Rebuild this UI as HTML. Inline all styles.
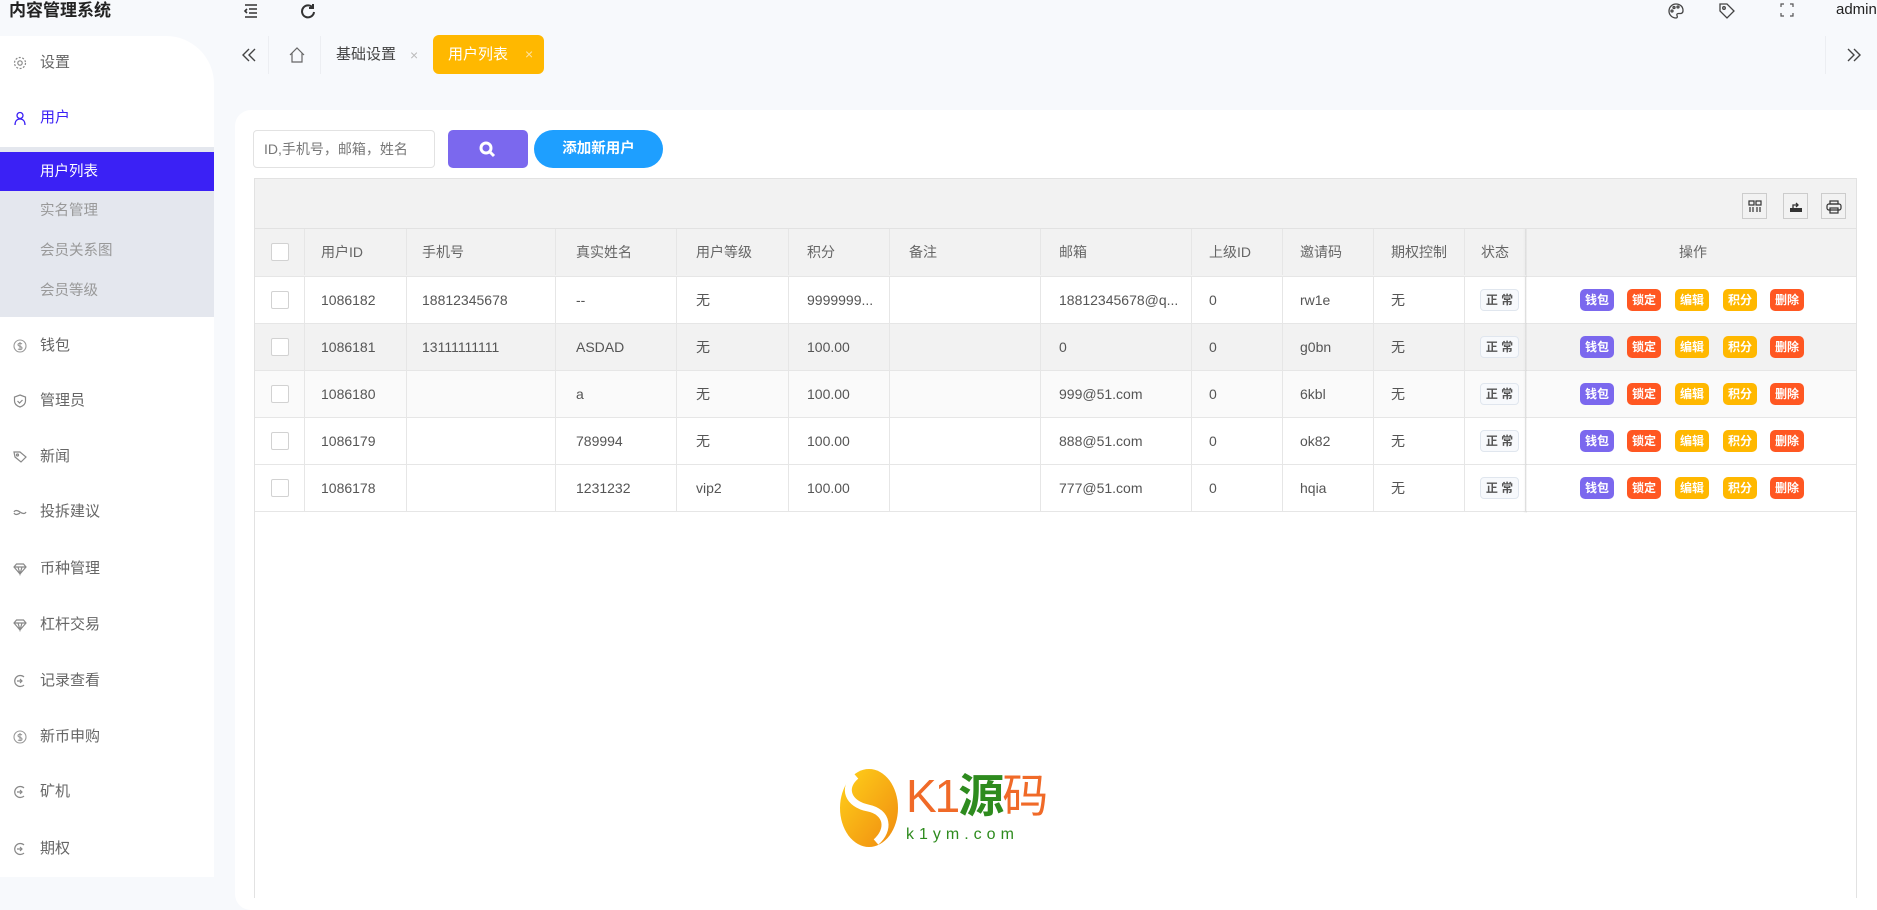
<!DOCTYPE html>
<html><head><meta charset="utf-8"><style>
*{margin:0;padding:0;box-sizing:border-box}
body{width:1877px;height:877px;overflow:hidden;background:#f7f9fc;font-family:"Liberation Sans","Noto Sans CJK SC",sans-serif;color:#333;position:relative}
.abs{position:absolute}
.title{left:9px;top:0;font-size:17px;font-weight:bold;color:#222;line-height:22px}
.side{left:0;top:36px;width:214px;height:841px;background:#fff;border-top-right-radius:48px;overflow:hidden}
.mi{position:absolute;left:0;width:214px;font-size:15px;color:#666;height:30px;line-height:30px;padding-left:40px}
.mi svg{position:absolute;left:13px;top:8px}
.sub{position:absolute;left:0;top:111px;width:214px;height:170px;background:#e4e7ee}
.sub div{height:40px;line-height:40px;padding-left:40px;font-size:14.5px;color:#999}
.sub .act{background:#3b21f5;color:#fff;margin-top:5px;height:39px}
.tab{font-size:15px;line-height:38px;top:36px;height:38px}
.card{left:235px;top:110px;width:1660px;height:800px;background:#fff;border-radius:16px}
.tbl{left:254px;top:178px;width:1603px;height:720px;border:1px solid #e2e2e2;border-bottom:none}
.tb{position:absolute;left:0;top:0;width:100%;height:50px;background:#f2f2f2;border-bottom:1px solid #e2e2e2}
.row{position:absolute;left:0;width:100%;height:47px;border-bottom:1px solid #e6e6e6;font-size:14px;color:#555}
.row span{position:absolute;top:0;line-height:46px;white-space:nowrap}
.row i{position:absolute;top:0;width:1px;height:46px;background:#e6e6e6}
.cb{position:absolute;left:16px;top:14px;width:18px;height:18px;border:1px solid #d2d2d2;background:#fff;border-radius:2px}
.st{position:absolute;left:1225px;top:12px;width:39px;height:22px;border:1px solid #e0e6ee;background:#f7f9fc;border-radius:4px;font-size:12px;line-height:20px;text-align:center;font-weight:bold;color:#555}
.b{position:absolute;top:12px;width:34px;height:22px;border-radius:5px;color:#fff;font-size:12px;font-weight:bold;line-height:22px;text-align:center}
.ib{position:absolute;top:14px;width:24px;height:26px;border:1px solid #ccc;background:#f2f2f2}
</style></head><body>
<div class="abs title">内容管理系统</div>
<svg class="abs" style="left:243px;top:3px" width="16" height="16" viewBox="0 0 16 16" fill="none" stroke="#333" stroke-width="1.6"><path d="M2 2h12M6 6h8M6 10h8M2 14h12M4 6l-2 2 2 2"/></svg>
<svg class="abs" style="left:300px;top:3px" width="16" height="16" viewBox="0 0 16 16" fill="none" stroke="#333" stroke-width="2"><path d="M13 5A6 6 0 1 0 14 9"/><path d="M13 1v4H9"/></svg>
<svg class="abs" style="left:1667px;top:2px" width="18" height="18" viewBox="0 0 18 18" fill="none" stroke="#444" stroke-width="1.3"><path d="M9 2a7 7 0 1 0 0 14c1.5 0 1.5-1.5 1-2.5s0-2 1.5-2H14a3 3 0 0 0 2-3C16 4.5 13 2 9 2z"/><circle cx="5" cy="9" r="1"/><circle cx="7" cy="5.5" r="1"/><circle cx="11" cy="5" r="1"/></svg>
<svg class="abs" style="left:1718px;top:2px" width="18" height="18" viewBox="0 0 18 18" fill="none" stroke="#444" stroke-width="1.3"><path d="M2 2h7l7 7-7 7-7-7z"/><circle cx="6" cy="6" r="1.3"/></svg>
<svg class="abs" style="left:1780px;top:3px" width="14" height="14" viewBox="0 0 14 14" fill="none" stroke="#555" stroke-width="1.2"><path d="M1 4V1h3M10 1h3v3M13 10v3h-3M4 13H1v-3"/></svg>
<div class="abs" style="left:1836px;top:0;font-size:15px;line-height:20px;color:#222">admin</div>

<div class="abs side">
<div class="mi" style="top:12px"><svg width="14" height="14" viewBox="0 0 14 14" fill="none" stroke="#888" stroke-width="1.2"><circle cx="7" cy="7" r="2.2"/><circle cx="7" cy="7" r="5.5" stroke-dasharray="2 1.5"/></svg>设置</div>
<div class="mi" style="top:67px;color:#3b21f5"><svg width="14" height="14" viewBox="0 0 14 14" fill="none" stroke="#3b21f5" stroke-width="1.3"><circle cx="7" cy="4.5" r="3"/><path d="M2 14c0-4 2-6 5-6s5 2 5 6"/></svg>用户</div>
<div class="sub"><div class="act">用户列表</div><div>实名管理</div><div>会员关系图</div><div>会员等级</div></div>
<div class="mi" style="top:295px"><svg width="14" height="14" viewBox="0 0 14 14" fill="none" stroke="#999" stroke-width="1.1"><circle cx="7" cy="7" r="6"/><path d="M9 5c-1-1-4-1-4 .8S9 7 9 9s-3 2-4 .8M7 3v8"/></svg>钱包</div>
<div class="mi" style="top:350px"><svg width="14" height="14" viewBox="0 0 14 14" fill="none" stroke="#888" stroke-width="1.2"><path d="M7 1l5.5 2v4c0 3-2.5 5-5.5 6-3-1-5.5-3-5.5-6V3z"/><path d="M4.5 7l2 2 3-3"/></svg>管理员</div>
<div class="mi" style="top:406px"><svg width="14" height="14" viewBox="0 0 14 14" fill="none" stroke="#888" stroke-width="1.2"><path d="M1 2h6l6 5-5 5-6-5z"/><circle cx="4.5" cy="5" r="1"/></svg>新闻</div>
<div class="mi" style="top:461px"><svg width="14" height="14" viewBox="0 0 14 14" fill="none" stroke="#888" stroke-width="1.2"><path d="M1 7c1-2 3-2 6 0s5 2 6 0M1 8c1 2 3 2 6 0"/></svg>投拆建议</div>
<div class="mi" style="top:518px"><svg width="14" height="14" viewBox="0 0 14 14" fill="none" stroke="#888" stroke-width="1.2"><path d="M1 5l2.5-3h7L13 5 7 12z M1 5h12M5 5l2 7 2-7"/></svg>币种管理</div>
<div class="mi" style="top:574px"><svg width="14" height="14" viewBox="0 0 14 14" fill="none" stroke="#888" stroke-width="1.2"><path d="M1 5l2.5-3h7L13 5 7 12z M1 5h12M5 5l2 7 2-7"/></svg>杠杆交易</div>
<div class="mi" style="top:630px"><svg width="14" height="14" viewBox="0 0 14 14" fill="none" stroke="#888" stroke-width="1.2"><path d="M11 3A5.5 5.5 0 1 0 11 11M4 7h5M7 5l2 2-2 2"/></svg>记录查看</div>
<div class="mi" style="top:686px"><svg width="14" height="14" viewBox="0 0 14 14" fill="none" stroke="#999" stroke-width="1.1"><circle cx="7" cy="7" r="6"/><path d="M9 5c-1-1-4-1-4 .8S9 7 9 9s-3 2-4 .8M7 3v8"/></svg>新币申购</div>
<div class="mi" style="top:741px"><svg width="14" height="14" viewBox="0 0 14 14" fill="none" stroke="#888" stroke-width="1.2"><path d="M11 3A5.5 5.5 0 1 0 11 11M4 7h5M7 5l2 2-2 2"/></svg>矿机</div>
<div class="mi" style="top:798px"><svg width="14" height="14" viewBox="0 0 14 14" fill="none" stroke="#888" stroke-width="1.2"><path d="M11 3A5.5 5.5 0 1 0 11 11M4 7h5M7 5l2 2-2 2"/></svg>期权</div>
</div>

<svg class="abs" style="left:241px;top:47px" width="16" height="16" viewBox="0 0 16 16" fill="none" stroke="#444" stroke-width="1.4"><path d="M8 2L2 8l6 6M14 2L8 8l6 6"/></svg>
<div class="abs" style="left:268px;top:36px;width:1px;height:38px;background:#eceef2"></div>
<svg class="abs" style="left:288px;top:46px" width="18" height="18" viewBox="0 0 18 18" fill="none" stroke="#666" stroke-width="1.2"><path d="M2 9L9 2l7 7M4 7v9h10V7"/></svg>
<div class="abs" style="left:320px;top:36px;width:1px;height:38px;background:#eceef2"></div>
<div class="abs tab" style="left:336px;color:#444">基础设置</div>
<div class="abs tab" style="left:410px;color:#bbb;font-size:14px">×</div>
<div class="abs tab" style="left:433px;width:111px;background:#ffb800;border-radius:6px;color:#fff;padding-left:15px;top:35px;height:39px">用户列表<span style="margin-left:17px;color:#fde2a0;font-size:14px">×</span></div>
<div class="abs" style="left:1825px;top:36px;width:1px;height:38px;background:#eceef2"></div>
<svg class="abs" style="left:1846px;top:47px" width="16" height="16" viewBox="0 0 16 16" fill="none" stroke="#444" stroke-width="1.4"><path d="M2 2l6 6-6 6M8 2l6 6-6 6"/></svg>

<div class="abs card"></div>
<div class="abs" style="left:253px;top:130px;width:182px;height:38px;border:1px solid #e2e2e2;border-radius:4px;font-size:14px;color:#777;line-height:36px;padding-left:10px">ID,手机号，邮箱，姓名</div>
<div class="abs" style="left:448px;top:130px;width:80px;height:38px;background:#7b68ee;border-radius:5px"><svg style="position:absolute;left:30px;top:10px" width="20" height="18" viewBox="0 0 20 18" fill="none" stroke="#fff" stroke-width="3"><circle cx="8" cy="8" r="5"/><path d="M12 12l4 4"/></svg></div>
<div class="abs" style="left:534px;top:130px;width:129px;height:38px;background:#1e9fff;border-radius:19px;color:#fff;font-size:14.5px;font-weight:bold;line-height:38px;text-align:center">添加新用户</div>

<div class="abs tbl">
<div class="tb">
<div class="ib" style="left:1487px;width:25px"><svg style="position:absolute;left:5px;top:6px" width="14" height="13" viewBox="0 0 14 13" fill="none" stroke="#333" stroke-width="1.2"><rect x="1" y="1" width="5" height="4"/><rect x="8" y="1" width="5" height="4"/><path d="M2 7v5M5 7v5M9 7v5M12 7v5"/></svg></div>
<div class="ib" style="left:1528px;width:25px"><svg style="position:absolute;left:5px;top:5px" width="14" height="14" viewBox="0 0 14 14"><path d="M1 9h12v4H1z" fill="#333"/><path d="M4 9V6h5M7 4l2 2-2 2" fill="none" stroke="#333" stroke-width="1.3"/></svg></div>
<div class="ib" style="left:1566px;width:25px"><svg style="position:absolute;left:4px;top:6px" width="16" height="14" viewBox="0 0 16 14" fill="none" stroke="#333" stroke-width="1.2"><rect x="4" y="1" width="8" height="3"/><rect x="1" y="4" width="14" height="6" rx="2"/><rect x="4" y="8" width="8" height="5"/></svg></div>
</div>
<div class="row" style="top:50px;height:48px;background:#f2f2f2;color:#666">
<div class="cb"></div><i style="left:49px"></i><span style="left:66px">用户ID</span><i style="left:151px"></i><span style="left:167px">手机号</span><i style="left:300px"></i><span style="left:321px">真实姓名</span><i style="left:421px"></i><span style="left:441px">用户等级</span><i style="left:533px"></i><span style="left:552px">积分</span><i style="left:634px"></i><span style="left:654px">备注</span><i style="left:785px"></i><span style="left:804px">邮箱</span><i style="left:936px"></i><span style="left:954px">上级ID</span><i style="left:1027px"></i><span style="left:1045px">邀请码</span><i style="left:1118px"></i><span style="left:1136px">期权控制</span><i style="left:1209px"></i><span style="left:1226px">状态</span><i style="left:1270px"></i><span style="left:1424px">操作</span>
</div>
<div class="row" style="top:98px;background:#fff"><div class="cb"></div><i style="left:49px"></i><span style="left:66px">1086182</span><i style="left:151px"></i><span style="left:167px">18812345678</span><i style="left:300px"></i><span style="left:321px">--</span><i style="left:421px"></i><span style="left:441px">无</span><i style="left:533px"></i><span style="left:552px">9999999...</span><i style="left:634px"></i><i style="left:785px"></i><span style="left:804px">18812345678@q...</span><i style="left:936px"></i><span style="left:954px">0</span><i style="left:1027px"></i><span style="left:1045px">rw1e</span><i style="left:1118px"></i><span style="left:1136px">无</span><i style="left:1209px"></i><div class="st">正 常</div><i style="left:1270px"></i><div class="b" style="left:1325px;background:#7b68ee">钱包</div><div class="b" style="left:1372px;background:#ff5722">锁定</div><div class="b" style="left:1420px;background:#ffb800">编辑</div><div class="b" style="left:1468px;background:#ffb800">积分</div><div class="b" style="left:1515px;background:#ff5722">删除</div></div>
<div class="row" style="top:145px;background:#f2f2f2"><div class="cb"></div><i style="left:49px"></i><span style="left:66px">1086181</span><i style="left:151px"></i><span style="left:167px">13111111111</span><i style="left:300px"></i><span style="left:321px">ASDAD</span><i style="left:421px"></i><span style="left:441px">无</span><i style="left:533px"></i><span style="left:552px">100.00</span><i style="left:634px"></i><i style="left:785px"></i><span style="left:804px">0</span><i style="left:936px"></i><span style="left:954px">0</span><i style="left:1027px"></i><span style="left:1045px">g0bn</span><i style="left:1118px"></i><span style="left:1136px">无</span><i style="left:1209px"></i><div class="st">正 常</div><i style="left:1270px"></i><div class="b" style="left:1325px;background:#7b68ee">钱包</div><div class="b" style="left:1372px;background:#ff5722">锁定</div><div class="b" style="left:1420px;background:#ffb800">编辑</div><div class="b" style="left:1468px;background:#ffb800">积分</div><div class="b" style="left:1515px;background:#ff5722">删除</div></div>
<div class="row" style="top:192px;background:#fafafa"><div class="cb"></div><i style="left:49px"></i><span style="left:66px">1086180</span><i style="left:151px"></i><i style="left:300px"></i><span style="left:321px">a</span><i style="left:421px"></i><span style="left:441px">无</span><i style="left:533px"></i><span style="left:552px">100.00</span><i style="left:634px"></i><i style="left:785px"></i><span style="left:804px">999@51.com</span><i style="left:936px"></i><span style="left:954px">0</span><i style="left:1027px"></i><span style="left:1045px">6kbl</span><i style="left:1118px"></i><span style="left:1136px">无</span><i style="left:1209px"></i><div class="st">正 常</div><i style="left:1270px"></i><div class="b" style="left:1325px;background:#7b68ee">钱包</div><div class="b" style="left:1372px;background:#ff5722">锁定</div><div class="b" style="left:1420px;background:#ffb800">编辑</div><div class="b" style="left:1468px;background:#ffb800">积分</div><div class="b" style="left:1515px;background:#ff5722">删除</div></div>
<div class="row" style="top:239px;background:#fff"><div class="cb"></div><i style="left:49px"></i><span style="left:66px">1086179</span><i style="left:151px"></i><i style="left:300px"></i><span style="left:321px">789994</span><i style="left:421px"></i><span style="left:441px">无</span><i style="left:533px"></i><span style="left:552px">100.00</span><i style="left:634px"></i><i style="left:785px"></i><span style="left:804px">888@51.com</span><i style="left:936px"></i><span style="left:954px">0</span><i style="left:1027px"></i><span style="left:1045px">ok82</span><i style="left:1118px"></i><span style="left:1136px">无</span><i style="left:1209px"></i><div class="st">正 常</div><i style="left:1270px"></i><div class="b" style="left:1325px;background:#7b68ee">钱包</div><div class="b" style="left:1372px;background:#ff5722">锁定</div><div class="b" style="left:1420px;background:#ffb800">编辑</div><div class="b" style="left:1468px;background:#ffb800">积分</div><div class="b" style="left:1515px;background:#ff5722">删除</div></div>
<div class="row" style="top:286px;background:#fff"><div class="cb"></div><i style="left:49px"></i><span style="left:66px">1086178</span><i style="left:151px"></i><i style="left:300px"></i><span style="left:321px">1231232</span><i style="left:421px"></i><span style="left:441px">vip2</span><i style="left:533px"></i><span style="left:552px">100.00</span><i style="left:634px"></i><i style="left:785px"></i><span style="left:804px">777@51.com</span><i style="left:936px"></i><span style="left:954px">0</span><i style="left:1027px"></i><span style="left:1045px">hqia</span><i style="left:1118px"></i><span style="left:1136px">无</span><i style="left:1209px"></i><div class="st">正 常</div><i style="left:1270px"></i><div class="b" style="left:1325px;background:#7b68ee">钱包</div><div class="b" style="left:1372px;background:#ff5722">锁定</div><div class="b" style="left:1420px;background:#ffb800">编辑</div><div class="b" style="left:1468px;background:#ffb800">积分</div><div class="b" style="left:1515px;background:#ff5722">删除</div></div>
<div style="position:absolute;left:1268px;top:50px;width:4px;height:284px;background:linear-gradient(to left,rgba(0,0,0,.05),transparent)"></div>
</div>

<svg class="abs" style="left:838px;top:768px" width="62" height="80" viewBox="0 0 62 80"><defs><linearGradient id="g" x1="0" y1="0" x2="1" y2="1"><stop offset="0" stop-color="#ffd21a"/><stop offset="1" stop-color="#f08a10"/></linearGradient></defs><ellipse cx="31" cy="40" rx="29" ry="39" fill="url(#g)"/><path d="M18 8C4 20 10 36 30 40s22 22 8 34" fill="none" stroke="#fff" stroke-width="7"/></svg>
<div class="abs" style="left:906px;top:768px;font-size:46px;line-height:56px;font-family:'Liberation Sans','Noto Sans CJK SC',sans-serif;letter-spacing:-2px"><span style="color:#f06a28;font-weight:300">K1</span><span style="color:#2e8b1e;font-weight:bold">源</span><span style="color:#f06a28">码</span></div>
<div class="abs" style="left:906px;top:826px;font-size:16px;letter-spacing:5px;color:#2e8b1e">k1ym.com</div>
</body></html>
